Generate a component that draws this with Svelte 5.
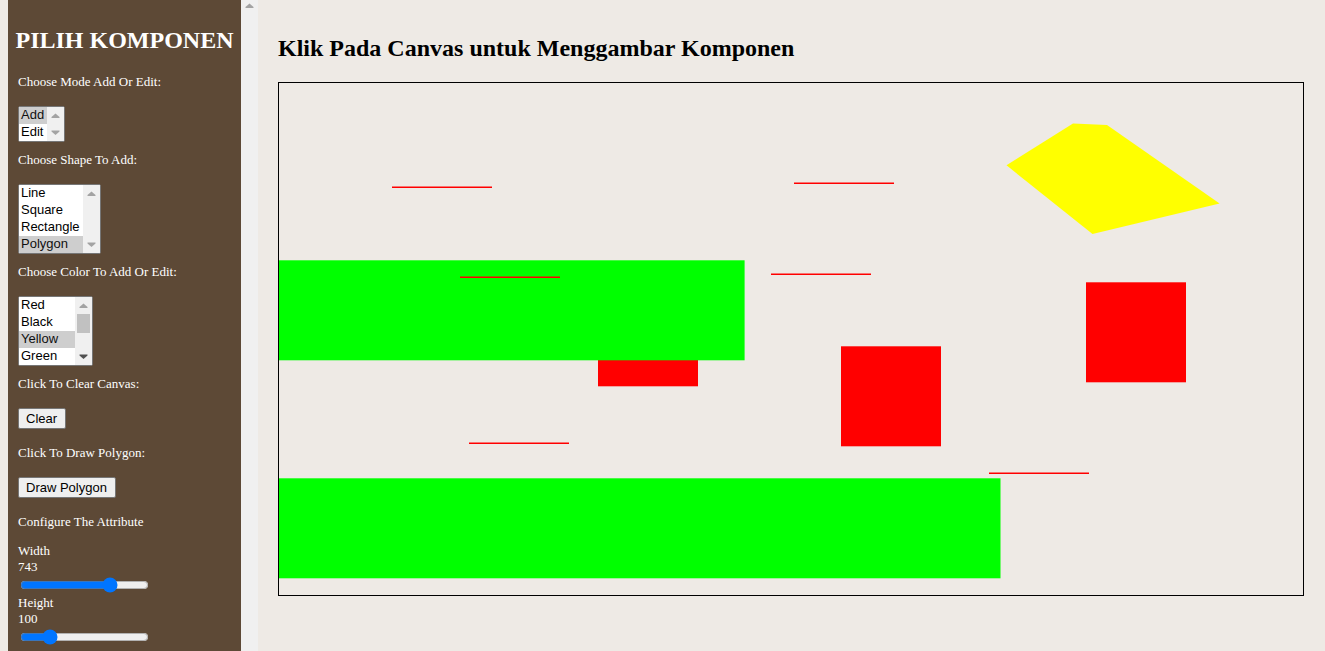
<script>
  let mode = $state('Add');
  let shape = $state('Polygon');
  let color = $state('Yellow');
  let width = $state(743);
  let height = $state(100);

  const modes = ['Add', 'Edit'];
  const shapes = ['Line', 'Square', 'Rectangle', 'Polygon'];
  const colors = ['Red', 'Black', 'Yellow', 'Green', 'Blue', 'Cyan', 'Magenta', 'White'];

  let lines = $state([
    { x: 113, y: 103 },
    { x: 515, y: 99 },
    { x: 181, y: 193 },
    { x: 492, y: 190 },
    { x: 190, y: 359 },
    { x: 710, y: 389 }
  ]);
  let squares = $state([
    { x: 319, y: 203.3 },
    { x: 562, y: 263.3 },
    { x: 807, y: 199.3 }
  ]);
  let rectangles = $state([
    { y: 177.3, width: 465.6 },
    { y: 395.3, width: 721.5 }
  ]);
  let polygons = $state(['727.5,82.3 794,40.6 828,42 940.6,120.4 813.5,151']);

  function clear() {
    lines = [];
    squares = [];
    rectangles = [];
    polygons = [];
  }
</script>

{#snippet arrow(down, active)}
  <svg class="arrow" class:active viewBox="0 0 17 17" aria-hidden="true">
    <path d={down ? 'M4.500 6.500h8v1l-4 3.500-4-3.500z' : 'M4.500 11h8v-1l-4-3.500-4 3.500z'} />
  </svg>
{/snippet}

<div class="page">
  <aside>
    <div class="panel">
      <h1>PILIH KOMPONEN</h1>
      <div class="fields">
        <label for="mode">Choose Mode Add Or Edit:</label>
        <div class="listbox">
          <select id="mode" size="2" bind:value={mode}>
            {#each modes as m}<option class:chosen={m === mode}>{m}</option>{/each}
          </select>
          <div class="bar">{@render arrow(false, false)}{@render arrow(true, false)}</div>
        </div>

        <label for="shape">Choose Shape To Add:</label>
        <div class="listbox">
          <select id="shape" size="4" bind:value={shape}>
            {#each shapes as s}<option class:chosen={s === shape}>{s}</option>{/each}
          </select>
          <div class="bar">{@render arrow(false, false)}{@render arrow(true, false)}</div>
        </div>

        <label for="color">Choose Color To Add Or Edit:</label>
        <div class="listbox">
          <select id="color" size="4" bind:value={color}>
            {#each colors as c}<option class:chosen={c === color}>{c}</option>{/each}
          </select>
          <div class="bar">
            {@render arrow(false, false)}
            <div class="thumb"></div>
            {@render arrow(true, true)}
          </div>
        </div>

        <label for="clear">Click To Clear Canvas:</label>
        <button id="clear" onclick={clear}>Clear</button>

        <label for="draw">Click To Draw Polygon:</label>
        <button id="draw">Draw Polygon</button>

        <p>Configure The Attribute</p>
        <div class="attribute">
          <label for="width">Width</label>
          <output for="width">{width}</output>
          <input id="width" type="range" min="0" max="1024" bind:value={width} />
        </div>
        <div class="attribute">
          <label for="height">Height</label>
          <output for="height">{height}</output>
          <input id="height" type="range" min="0" max="512" bind:value={height} />
        </div>
      </div>
    </div>
    <div class="bar">{@render arrow(false, false)}</div>
  </aside>

  <main>
    <h2>Klik Pada Canvas untuk Menggambar Komponen</h2>
    <div class="canvas">
      <svg viewBox="0 0 1024 512" role="img" aria-label="Canvas">
        {#each squares as s}<rect x={s.x} y={s.y} width="100" height="100" fill="#f00" />{/each}
        {#each rectangles as r}<rect x="0" y={r.y} width={r.width} height="100" fill="#0f0" />{/each}
        {#each lines as l}<rect x={l.x} y={l.y + 0.5} width="100" height="1.5" fill="#f00" />{/each}
        {#each polygons as p}<polygon points={p} fill="#ff0" />{/each}
      </svg>
    </div>
  </main>
</div>

<style>
  :global(body) {
    margin: 0;
    background: #eeeae5;
  }
  .page {
    display: flex;
    height: 100vh;
    overflow: hidden;
    font-family: 'Liberation Serif', 'Times New Roman', serif;
    font-size: 13px;
    line-height: 16px;
  }
  aside {
    display: flex;
    flex: none;
    margin-left: 8px;
  }
  .panel {
    width: 233px;
    overflow: hidden;
    background: #5d4936;
    color: #fff;
  }
  h1,
  h2 {
    font-size: 24px;
    line-height: 28px;
  }
  h1 {
    margin: 26px 0 20px;
    text-align: center;
    white-space: nowrap;
  }
  .fields {
    display: flex;
    flex-direction: column;
    align-items: flex-start;
    padding-left: 10px;
  }
  .fields > label {
    margin-bottom: 16px;
  }
  .listbox {
    display: flex;
    margin-bottom: 10px;
    border: 1px solid #767676;
    border-radius: 2px;
    background: #fff;
    overflow: hidden;
  }
  select {
    border: 0;
    border-radius: 0;
    padding: 0;
    outline: 0;
    background: #fff;
    color: #000;
    font: 13px/16px 'Liberation Sans', Arial, sans-serif;
    scrollbar-width: none;
  }
  option {
    height: 16px;
    min-height: 16px;
    padding: 0 3px 1px 2px;
  }
  option.chosen {
    background: #cecece linear-gradient(#cecece, #cecece);
    color: #101010;
  }
  .bar {
    display: flex;
    flex-direction: column;
    justify-content: space-between;
    width: 17px;
    background: #f0f0f0;
  }
  .arrow {
    display: block;
    width: 17px;
    height: 17px;
    flex: none;
    fill: #a3a3a3;
  }
  aside > .bar .arrow {
    margin-top: -3px;
  }
  .arrow.active {
    fill: #505050;
  }
  .thumb {
    height: 19px;
    margin: 0 2px 15px;
    background: #c1c1c1;
  }
  button {
    height: 21px;
    margin: 0 0 16px;
    padding: 0 8px 0 7px;
    border: 1px solid #767676;
    border-radius: 2px;
    background: #efefef;
    color: #000;
    font: 13px/16px 'Liberation Sans', Arial, sans-serif;
  }
  p {
    margin: 0 0 13px;
  }
  .attribute {
    display: flex;
    flex-direction: column;
  }
  input {
    width: 129px;
    height: 16px;
    margin: 2px;
  }
  main {
    flex: 1;
    min-width: 0;
    padding: 0 21px 0 20px;
  }
  h2 {
    margin: 34px 0 20px;
  }
  .canvas {
    border: 1px solid #000;
  }
  .canvas svg {
    display: block;
    width: 100%;
  }
</style>
